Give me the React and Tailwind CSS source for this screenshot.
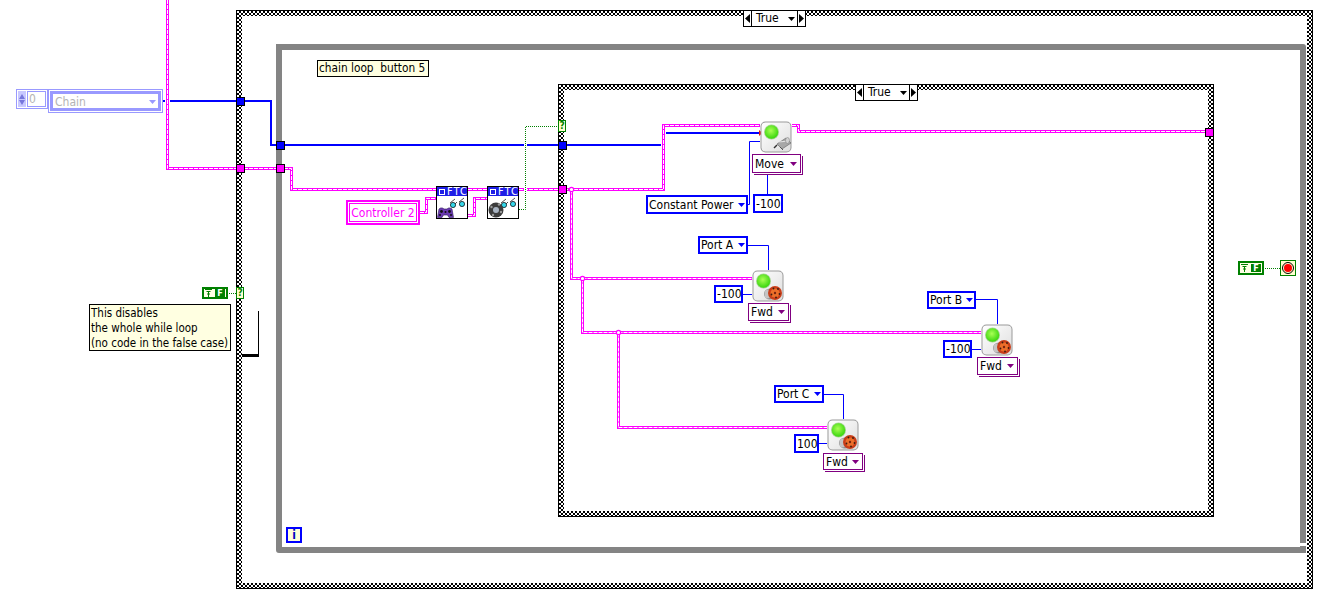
const font = "font-['DejaVu_Sans_Condensed','Liberation_Sans',sans-serif]";

function Arrow({ className }) {
  return (
    <svg width="7" height="4" viewBox="0 0 7 4" className={`shrink-0 ${className}`}>
      <polygon points="0,0 7,0 3.5,4" fill="currentColor" />
    </svg>
  );
}

function Frame({ className }) {
  // hatched case structure border
  return (
    <div className={`absolute border border-black p-[5px] bg-[repeating-conic-gradient(#000_0_25%,#fff_0_50%)] bg-[length:4px_4px] ${className}`}>
      <div className="h-full w-full bg-white" />
    </div>
  );
}

function Selector({ className }) {
  return (
    <div className={`absolute flex h-[17px] w-[63px] items-stretch border border-black bg-white text-[12px] leading-[15px] ${className}`}>
      <div className="flex w-[8px] items-center justify-center border-r border-black">
        <svg width="5" height="9" viewBox="0 0 5 9"><polygon points="5,0 5,9 0,4.5" fill="#000" /></svg>
      </div>
      <div className="flex flex-1 items-center justify-between pl-[4px] pr-[2px]">
        <span>True</span>
        <Arrow className="text-black" />
      </div>
      <div className="flex w-[8px] items-center justify-center border-l border-black">
        <svg width="5" height="9" viewBox="0 0 5 9"><polygon points="0,0 0,9 5,4.5" fill="#000" /></svg>
      </div>
    </div>
  );
}

function Terminal({ className }) {
  return <div className={`absolute h-[9px] w-[9px] border border-black ${className}`} />;
}

function BlueBox({ className, text, arrow }) {
  return (
    <div className={`absolute flex items-center justify-between whitespace-nowrap border-[2px] border-[#0000ff] bg-white pl-[1px] pr-[1px] text-[12px] leading-none text-black ${className}`}>
      <span>{text}</span>
      {arrow && <Arrow className="text-[#0000ff]" />}
    </div>
  );
}

function PurpleBox({ className, text }) {
  return (
    <div className={`absolute flex items-center justify-between whitespace-nowrap border border-[#800080] bg-white pl-[2px] pr-[3px] text-[12px] leading-none text-black shadow-[1px_1px_0_0_#fff,2px_2px_0_0_#800080] ${className}`}>
      <span>{text}</span>
      <Arrow className="text-[#800080]" />
    </div>
  );
}

function MotorIcon({ kind }) {
  return (
    <svg width="32" height="32" viewBox="0 0 32 32">
      <rect x="0.5" y="0.5" width="31" height="31" rx="5" fill="#9a9a9a" />
      <rect x="1.5" y="1.5" width="29" height="29" rx="4" fill="url(#nodeBg)" />
      <circle cx="11.5" cy="11" r="7.5" fill="#6fbf50" opacity="0.6" />
      <circle cx="11.5" cy="11" r="6.7" fill="url(#led)" />
      {kind === 'move' ? (
        <g>
          <path d="M17 23 L26 17 L31 22 L22 28 Z" fill="#a8a8a8" stroke="#6e6e6e" strokeWidth="0.7" />
          <path d="M19 21 L28 20" stroke="#e4e4e4" strokeWidth="1" />
          <ellipse cx="27.5" cy="19.5" rx="2" ry="3" fill="#d2d2d2" stroke="#777" strokeWidth="0.5" />
          <path d="M17 24 L14 27" stroke="#333" strokeWidth="1.4" />
          <path d="M20 26 L23 29" stroke="#555" strokeWidth="1" />
        </g>
      ) : (
        <g>
          <ellipse cx="18" cy="24" rx="6" ry="5.5" fill="#8e8e8e" />
          <ellipse cx="15.5" cy="24" rx="3" ry="4.5" fill="#c4c4c4" />
          <circle cx="23" cy="23" r="7" fill="#c93d18" />
          <circle cx="23" cy="23" r="4.5" fill="#ec6f2a" />
          <circle cx="21.5" cy="18.5" r="0.9" fill="#3a1c10" />
          <circle cx="26" cy="19" r="0.9" fill="#3a1c10" />
          <circle cx="27.5" cy="24" r="0.9" fill="#3a1c10" />
          <circle cx="24" cy="27.5" r="0.9" fill="#3a1c10" />
          <circle cx="19.5" cy="24.5" r="0.9" fill="#3a1c10" />
          <circle cx="23" cy="23" r="1.2" fill="#7a2410" />
        </g>
      )}
    </svg>
  );
}

function Glasses() {
  return (
    <g fill="#35d6e8" stroke="#000" strokeWidth="0.7">
      <path d="M13 7 L18 3 M22 6 L27 2 M18 8 L20 6" fill="none" />
      <circle cx="16" cy="9" r="2.6" />
      <circle cx="25" cy="8" r="2.6" />
    </g>
  );
}

function FtcNode({ className, kind }) {
  return (
    <div className={`absolute h-[33px] w-[32px] overflow-hidden border border-black bg-white ${className}`}>
      <div className="flex h-[9px] items-center gap-[2px] bg-[#1e1ee6] pl-[2px] text-[11px] leading-none tracking-[1px] text-white">
        <span className="h-[6px] w-[6px] shrink-0 border border-white" />
        <span>FTC</span>
      </div>
      <svg width="30" height="22" viewBox="0 0 30 22" className="block">
        <Glasses />
        {kind === 'pad' ? (
          <g>
            <path d="M0.5 21.5 L2 13 C3 11.5 6 11.5 7 13 L10 13 C11 11.5 14 11.5 15 13 L16.5 21.5 L12 21.5 L10.5 19 L6.5 19 L5 21.5 Z" fill="#6a3ab0" stroke="#2e1660" strokeWidth="0.6" />
            <circle cx="4.5" cy="15.5" r="1.4" fill="#111" />
            <circle cx="12.5" cy="15.5" r="1.4" fill="#111" />
            <circle cx="8.5" cy="16" r="1" fill="#111" />
            <circle cx="3" cy="19" r="1" fill="#111" />
            <circle cx="14" cy="19" r="1" fill="#111" />
          </g>
        ) : (
          <g>
            <circle cx="8" cy="14" r="7.5" fill="#3c3c3c" />
            <circle cx="8" cy="14" r="3" fill="#a9b4c2" />
            <circle cx="3.5" cy="11" r="1.2" fill="#999" />
            <circle cx="11" cy="8.5" r="1.2" fill="#999" />
            <circle cx="13" cy="16" r="1.2" fill="#999" />
            <circle cx="5" cy="19" r="1.2" fill="#999" />
          </g>
        )}
      </svg>
    </div>
  );
}

function BoolConst({ className }) {
  return (
    <div className={`absolute flex items-center justify-end gap-[3px] border-[2px] border-[#008000] bg-[#ffffe6] pr-px ${className}`}>
      <svg width="7" height="8" viewBox="0 0 7 8">
        <path d="M0 0.5 H7 M1.5 2.5 H5.5 M3.5 3 V8 M2 5 H5" stroke="#008000" strokeWidth="1" fill="none" />
      </svg>
      <span className="flex h-[8px] w-[10px] items-center justify-center bg-[#008000] text-[9px] font-bold leading-none text-white">F</span>
    </div>
  );
}

function GreenQ({ className }) {
  return (
    <div className={`absolute flex items-center justify-center border border-[#008000] bg-[#ffffd0] text-[10px] font-bold leading-none text-[#008000] ${className}`}>?</div>
  );
}

function PinkWire({ d }) {
  return (
    <g fill="none">
      <path d={d} stroke="#ff00ff" strokeWidth="3" />
      <path d={d} stroke="#fff" strokeWidth="1" strokeDasharray="4 1" />
    </g>
  );
}

const pinkPaths = [
  'M167.5 0 V168.5 H291.5 V189.5 H436',
  'M420 212.5 H426.5 V198.5 H436',
  'M468 215.5 H474.5 V198.5 H487',
  'M468 189.5 H487',
  'M519 189.5 H663.5 V125.5 H760',
  'M792 125.5 H798.5 V131.5 H1205',
  'M571.5 189.5 V278.5 H752',
  'M582.5 278.5 V332.5 H981',
  'M618.5 332.5 V427.5 H827',
];

function Wires() {
  return (
    <svg width="1330" height="605" className="absolute left-0 top-0">
      <defs>
        <linearGradient id="nodeBg" x1="0" y1="0" x2="1" y2="1">
          <stop offset="0" stopColor="#fff" />
          <stop offset="1" stopColor="#dedede" />
        </linearGradient>
        <radialGradient id="led" cx="0.45" cy="0.4" r="0.6">
          <stop offset="0" stopColor="#aaff55" />
          <stop offset="1" stopColor="#39d60e" />
        </radialGradient>
      </defs>

      {/* enum wires */}
      <path d="M163 101 H271 V145 H665 V133 H760" fill="none" stroke="#0000ff" strokeWidth="2" />

      {/* cluster wires */}
      {pinkPaths.map((d) => <path key={d} d={d} fill="none" stroke="#fff" strokeWidth="5" />)}
      {pinkPaths.map((d) => <PinkWire key={d} d={d} />)}
      <g fill="#fff" stroke="#ff00ff" strokeWidth="1.2">
        <circle cx="571.5" cy="189.5" r="2.2" />
        <circle cx="582.5" cy="278.5" r="2.2" />
        <circle cx="618.5" cy="332.5" r="2.2" />
      </g>
      <polygon points="759,130 762.5,133 759,136" fill="#e01010" />

      {/* thin numeric wires */}
      <g fill="none" stroke="#0000ff" strokeWidth="1">
        <path d="M748 204.5 H749.5 V141.5 H760" />
        <path d="M767.5 174 V194" />
        <path d="M748 245.5 H768.5 V270" />
        <path d="M743 294.5 H752" />
        <path d="M976 299.5 H997.5 V324" />
        <path d="M972 349.5 H981" />
        <path d="M824 394.5 H843.5 V419" />
        <path d="M819 443.5 H827" />
      </g>

      {/* boolean wires */}
      <path d="M519 209.5 H525.5 V126.5 H558" fill="none" stroke="#fff" strokeWidth="3" />
      <g fill="none" stroke="#008000" strokeWidth="1" strokeDasharray="1 1">
        <path d="M519 209.5 H525.5 V126.5 H558" />
        <path d="M227 293.5 H236" />
        <path d="M1265 268.5 H1280" />
      </g>

      {/* broken wire in the left frame */}
      <path d="M258.5 311 V357" fill="none" stroke="#000" strokeWidth="1" />
      <path d="M242 355.5 H259" fill="none" stroke="#000" strokeWidth="3" />
    </svg>
  );
}

export default function App() {
  return (
    <div className={`relative h-[605px] w-[1330px] overflow-hidden bg-white ${font}`}>
      <Frame className="left-[236px] top-[10px] h-[579px] w-[1077px]" />
      <div className="absolute left-[276px] top-[44px] h-[509px] w-[1030px] rounded-tr-[3px] rounded-bl-[3px] border-[6px] border-[#848484]" />
      {/* the while loop's open corner */}
      <div className="absolute left-[1300px] top-[543px] h-[3px] w-[6px] bg-white" />
      <Frame className="left-[558px] top-[84px] h-[433px] w-[656px]" />

      <Selector className="left-[743px] top-[10px]" />
      <Selector className="left-[855px] top-[84px]" />

      {/* disabled front panel controls */}
      <div className="absolute left-[16px] top-[89px] flex h-[20px] w-[32px] items-stretch border border-[#9999ff] bg-white p-px text-[12px] leading-none text-[#b4b4b4]">
        <div className="flex w-[8px] flex-col items-center justify-center gap-[1px] bg-[#c8c8ff]">
          <svg width="6" height="5" viewBox="0 0 6 5"><polygon points="3,0 6,5 0,5" fill="#7777dd" /></svg>
          <svg width="6" height="5" viewBox="0 0 6 5"><polygon points="0,0 6,0 3,5" fill="#7777dd" /></svg>
        </div>
        <div className="ml-px flex flex-1 items-center border border-[#9999ff] pl-px">0</div>
      </div>
      <div className="absolute left-[48px] top-[89px] h-[24px] w-[115px] border border-[#9999ff] bg-white p-px">
        <div className="flex h-full items-center justify-between border-[3px] border-[#9999ff] pl-[2px] pr-[2px] pt-px text-[12px] leading-none text-[#b4b4b4]">
          <span>Chain</span>
          <Arrow className="text-[#9999ff]" />
        </div>
      </div>

      <Wires />

      <Terminal className="left-[236px] top-[97px] bg-[#0000ff]" />
      <Terminal className="left-[276px] top-[141px] bg-[#0000ff]" />
      <Terminal className="left-[558px] top-[141px] bg-[#0000ff]" />
      <Terminal className="left-[236px] top-[164px] bg-[#ff00ff]" />
      <Terminal className="left-[276px] top-[164px] bg-[#ff00ff]" />
      <Terminal className="left-[558px] top-[185px] bg-[#ff00ff]" />
      <Terminal className="left-[1205px] top-[128px] bg-[#ff00ff]" />

      <div className="absolute left-[317px] top-[60px] flex h-[17px] w-[112px] items-center whitespace-pre border border-black bg-[#ffffe1] pl-[1px] text-[11.75px] leading-none text-black">chain loop  button 5</div>

      <div className="absolute left-[89px] top-[304px] h-[47px] w-[142px] whitespace-nowrap border border-black bg-[#ffffe1] pl-[1px] pt-px text-[11.5px] leading-[15px] text-black">
        <div>This disables</div>
        <div>the whole while loop</div>
        <div>(no code in the false case)</div>
      </div>

      <BoolConst className="left-[202px] top-[287px] h-[12px] w-[26px]" />
      <GreenQ className="left-[236px] top-[287px] h-[12px] w-[8px]" />
      <GreenQ className="left-[558px] top-[120px] h-[12px] w-[8px]" />

      <BoolConst className="left-[1238px] top-[261px] h-[14px] w-[26px]" />
      <div className="absolute left-[1280px] top-[260px] flex h-[16px] w-[16px] items-center justify-center border border-[#008000] bg-[#ffffd0]">
        <div className="flex h-[12px] w-[12px] items-center justify-center rounded-full border border-black">
          <div className="h-[8px] w-[8px] rounded-full bg-[#ff0000]" />
        </div>
      </div>

      <div className="absolute left-[286px] top-[527px] flex h-[16px] w-[16px] items-center justify-center border-[2px] border-[#0000ff] bg-[#ffffd8] text-[12px] font-bold leading-none text-[#0000c0]">i</div>

      <div className="absolute left-[346px] top-[200px] h-[25px] w-[74px] border-[2px] border-[#ff00ff] bg-white p-px">
        <div className="flex h-full items-center justify-center border border-[#ff00ff] text-[12px] leading-none text-[#ff00ff]">Controller 2</div>
      </div>

      <FtcNode className="left-[436px] top-[186px]" kind="pad" />
      <FtcNode className="left-[487px] top-[186px]" kind="gear" />

      {/* Move block */}
      <div className="absolute left-[760px] top-[121px] h-[32px] w-[32px]"><MotorIcon kind="move" /></div>
      <PurpleBox className="left-[752px] top-[154px] h-[19px] w-[49px]" text="Move" />
      <BlueBox className="left-[646px] top-[195px] h-[19px] w-[102px]" text="Constant Power" arrow />
      <BlueBox className="left-[753px] top-[194px] h-[19px] w-[30px]" text="-100" />

      {/* Port A */}
      <div className="absolute left-[752px] top-[270px] h-[32px] w-[32px]"><MotorIcon /></div>
      <BlueBox className="left-[698px] top-[236px] h-[18px] w-[50px]" text="Port A" arrow />
      <BlueBox className="left-[714px] top-[285px] h-[18px] w-[29px]" text="-100" />
      <PurpleBox className="left-[748px] top-[303px] h-[18px] w-[41px]" text="Fwd" />

      {/* Port B */}
      <div className="absolute left-[981px] top-[324px] h-[32px] w-[32px]"><MotorIcon /></div>
      <BlueBox className="left-[927px] top-[291px] h-[18px] w-[49px]" text="Port B" arrow />
      <BlueBox className="left-[943px] top-[340px] h-[18px] w-[29px]" text="-100" />
      <PurpleBox className="left-[977px] top-[357px] h-[18px] w-[41px]" text="Fwd" />

      {/* Port C */}
      <div className="absolute left-[827px] top-[419px] h-[32px] w-[32px]"><MotorIcon /></div>
      <BlueBox className="left-[774px] top-[385px] h-[18px] w-[50px]" text="Port C" arrow />
      <BlueBox className="left-[794px] top-[434px] h-[19px] w-[25px]" text="100" />
      <PurpleBox className="left-[823px] top-[453px] h-[17px] w-[40px]" text="Fwd" />
    </div>
  );
}
